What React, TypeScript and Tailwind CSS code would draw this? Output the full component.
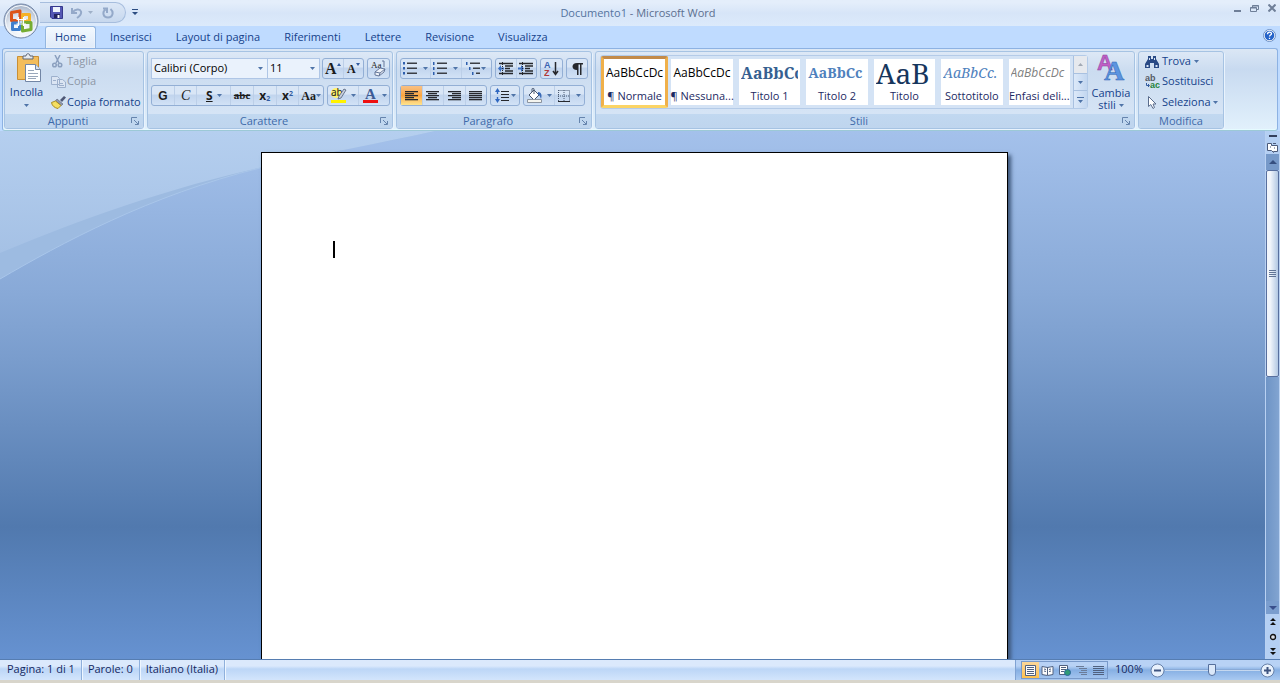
import React from "react";

const tabs = ["Inserisci", "Layout di pagina", "Riferimenti", "Lettere", "Revisione", "Visualizza"];

const styleCards = [
  { name: "¶ Normale", sample: "AaBbCcDc", look: "text-xs text-black", active: true },
  { name: "¶ Nessuna...", sample: "AaBbCcDc", look: "text-xs text-black" },
  { name: "Titolo 1", sample: "AaBbCc", look: "text-base font-bold text-[#365f91] font-['Noto_Serif','DejaVu_Serif',serif]" },
  { name: "Titolo 2", sample: "AaBbCc", look: "text-sm font-bold text-[#4f81bd] font-['Noto_Serif','DejaVu_Serif',serif]" },
  { name: "Titolo", sample: "AaB", look: "text-[28px] text-[#17365d] font-['Noto_Serif','DejaVu_Serif',serif]" },
  { name: "Sottotitolo", sample: "AaBbCc.", look: "text-sm italic text-[#4f81bd] font-['Noto_Serif','DejaVu_Serif',serif]" },
  { name: "Enfasi deli...", sample: "AaBbCcDc", look: "text-xs italic text-[#808080]" },
];

function Caret({ muted = false }: { muted?: boolean }) {
  return (
    <svg width="5" height="3" viewBox="0 0 5 3" className="shrink-0" aria-hidden="true">
      <path d="M0 0h5L2.500 3z" fill={muted ? "#9fb0c8" : "#4f74a8"} />
    </svg>
  );
}

interface GroupProps {
  label: string;
  launcher?: boolean;
  className?: string;
  children: React.ReactNode;
}

function Group({ label, launcher = true, className = "", children }: GroupProps) {
  return (
    <section
      aria-label={label}
      className={`flex flex-col overflow-hidden rounded-[3px] border border-[#a6c3e3] bg-linear-to-b from-[#dde8f6] from-0% via-[#cbdcf0] via-25% to-[#d9e7f7] shadow-[1px_1px_0_#e9f3fd] ${className}`}
    >
      <div className="flex min-h-0 flex-1">{children}</div>
      <div className="flex h-[14px] items-center bg-linear-to-b from-[#c1d8f0] to-[#bfd5ee] text-[#3e6aaa]">
        <span className="flex-1 text-center leading-[14px]">{label}</span>
        {launcher && (
          <button type="button" aria-label={`Opzioni ${label}`} className="mr-1">
            <svg width="8" height="8" viewBox="0 0 8 8" fill="none" stroke="#6684ad">
              <path d="M.5 6V.5H6M3 3l4 4M7.500 4v3.500H4" />
            </svg>
          </button>
        )}
      </div>
    </section>
  );
}

function Cluster({ className = "", children }: { className?: string; children: React.ReactNode }) {
  return (
    <div
      className={`flex h-[21px] divide-x divide-[#bccfe8] rounded-[3px] border border-[#93afd5] bg-linear-to-b from-[#d9e6f6] from-40% via-[#c2d5ee] via-50% to-[#d2e2f6] ${className}`}
    >
      {children}
    </div>
  );
}

interface ToolProps {
  label: string;
  className?: string;
  caret?: boolean;
  children: React.ReactNode;
}

function Tool({ label, className = "", caret, children }: ToolProps) {
  return (
    <button
      type="button"
      aria-label={label}
      className={`flex flex-1 items-center justify-center gap-1 text-[#1c1c1c] ${className}`}
    >
      {children}
      {caret && <Caret />}
    </button>
  );
}

function Combo({ label, value, className = "" }: { label: string; value: string; className?: string }) {
  return (
    <div className={`relative h-[21px] border border-[#afc6e6] bg-[#eaf2fc] ${className}`}>
      <select
        aria-label={label}
        defaultValue={value}
        className="h-full w-full appearance-none bg-transparent pl-[2px] text-[11px] text-black outline-none"
      >
        <option>{value}</option>
      </select>
      <span className="pointer-events-none absolute top-[8px] right-1">
        <Caret />
      </span>
    </div>
  );
}

/* Five text lines; each entry is [x, width] */
function Lines({ rows }: { rows: [number, number][] }) {
  return (
    <svg width="15" height="11" viewBox="0 0 15 11" fill="#26282d">
      {rows.map(([x, w], i) => (
        <rect key={i} x={x} y={i * 2 + 1} width={w} height="1.300" />
      ))}
    </svg>
  );
}

function OfficeLogo() {
  return (
    <svg width="36" height="36" viewBox="0 0 36 36">
      <defs>
        <radialGradient id="orb" cx="50%" cy="75%" r="70%">
          <stop offset="0" stopColor="#ffffff" />
          <stop offset=".55" stopColor="#e4eaf2" />
          <stop offset="1" stopColor="#a9b6ca" />
        </radialGradient>
      </defs>
      <circle cx="18" cy="18" r="17" fill="url(#orb)" stroke="#7387a8" />
      <circle cx="18" cy="18" r="15.500" fill="none" stroke="#f8fbff" />
      <g fill="none" strokeWidth="3" strokeLinejoin="round">
        <path d="M8.500 9.500l8.500-1.500v9.500H8.500z" stroke="#dd5418" />
        <path d="M19.500 11.500h7v6.500h-7z" stroke="#f5b126" />
        <path d="M9.500 20h7v6.500h-7z" stroke="#3f7fce" />
        <path d="M19.500 19.500H28v7l-8.500 1.500z" stroke="#76ad33" />
      </g>
      <path d="M15.500 14v9M20.500 14v9M13.500 16.500h9.500M13.500 21h9.500" fill="none" stroke="#ffffff" strokeWidth="1.200" />
      <path d="M16.500 17.500h3v2.500h-3z" fill="#c4d8ee" />
    </svg>
  );
}

function TitleBar() {
  return (
    <header className="flex h-[26px] items-start bg-linear-to-b from-[#e4eefb] from-10% via-[#d7e5f8] via-50% to-[#dceafb]">
      <div className="flex flex-1">
        <div className="mt-[2px] ml-10 flex h-[21px] w-[86px] items-center gap-[7px] rounded-r-full border border-l-0 border-[#a6bddd] bg-linear-to-b from-[#dce7f6] to-[#c7d8ee] pl-[10px]">
          <button type="button" aria-label="Salva">
            <svg width="13" height="13" viewBox="0 0 13 13">
              <path d="M.5.5h12v12H2L.5 11z" fill="#5457b4" stroke="#35388c" />
              <path d="M3 1h7v5H3z" fill="#eef3fc" />
              <path d="M4 8h6v4H4z" fill="#23245f" />
              <path d="M7.500 9h2v3h-2z" fill="#ffffff" />
            </svg>
          </button>
          <button type="button" aria-label="Annulla" className="flex items-center gap-[5px]">
            <svg width="13" height="12" viewBox="0 0 13 12" fill="none" stroke="#94a9c9" strokeWidth="2">
              <path d="M2 1v5h5M2.500 5.500C5 2 10 1.500 11 4.500c.7 2.500-1 4.500-4 6.500" />
            </svg>
            <Caret muted />
          </button>
          <button type="button" aria-label="Ripeti" className="pl-[2px]">
            <svg width="12" height="12" viewBox="0 0 12 12" fill="none" stroke="#94a9c9" strokeWidth="2">
              <path d="M8.500 2C12 5 11 10.500 6 10.500S0 5 3.500 2.500M1 1.500h4V6" />
            </svg>
          </button>
        </div>
        <button type="button" aria-label="Personalizza barra" className="ml-[6px]">
          <svg width="6" height="6" viewBox="0 0 6 6" fill="#2c4d82">
            <path d="M0 0h6v1H0zM0 3h6L3 6z" />
          </svg>
        </button>
      </div>
      <h1 className="text-[11px] leading-[26px] text-[#5c6f8f]">
        <span className="text-[#54749f]">Documento1</span> - Microsoft Word
      </h1>
      <div className="flex flex-1 items-center justify-end gap-[9px] pt-1 pr-1">
        <button type="button" aria-label="Riduci a icona" className="pt-[5px]">
          <svg width="7" height="2"><path d="M0 0h7v2H0z" fill="#6f7f98" /></svg>
        </button>
        <button type="button" aria-label="Ripristina">
          <svg width="9" height="7" viewBox="0 0 9 7" fill="none" stroke="#6f7f98">
            <path d="M2.500 2V.5h6v4H7M.5 2.500h6v4h-6zM.5 3h6M2.500 1h6" />
          </svg>
        </button>
        <button type="button" aria-label="Chiudi">
          <svg width="8" height="8" viewBox="0 0 8 8" stroke="#6f7f98" strokeWidth="2">
            <path d="M.5.5l7 7M7.500.5l-7 7" />
          </svg>
        </button>
      </div>
    </header>
  );
}

function TabRow() {
  return (
    <nav className="flex h-[22px] items-stretch bg-[#bfdbff] pl-[45px]">
      <button
        type="button"
        className="mr-[2px] w-[51px] rounded-t-[3px] border border-b-0 border-[#93b6e0] bg-linear-to-b from-[#f3f9ff] to-[#dfeaf8] pb-px text-[#15428b] shadow-[inset_0_0_2px_#ffffff]"
      >
        Home
      </button>
      {tabs.map((tab) => (
        <button key={tab} type="button" className="px-3 text-[#15428b]">
          {tab}
        </button>
      ))}
      <button type="button" aria-label="Guida" className="mr-1 ml-auto pb-1">
        <svg width="13" height="13" viewBox="0 0 13 13">
          <circle cx="6.500" cy="6.500" r="6" fill="#ffffff" stroke="#6c8fc4" />
          <circle cx="6.500" cy="6.500" r="4.800" fill="#2563c9" />
          <path d="M4.500 5.200c0-2.700 4-2.700 4-.4 0 1.200-2 1.400-2 2.700M6.500 8.700v1.300" fill="none" stroke="#fff" strokeWidth="1.300" />
        </svg>
      </button>
    </nav>
  );
}

function ClipboardGroup() {
  return (
    <Group label="Appunti" className="w-[140px]">
      <button type="button" className="flex w-[43px] flex-col items-center pt-px text-[#15428b]">
        <svg width="28" height="30" viewBox="0 0 28 30" className="ml-1">
          <path d="M2.500 3.500h21v23h-21z" fill="#f3bd5c" stroke="#c98f35" />
          <path d="M8 5V3h3c0-3 4-3 4 0h3v3H8z" fill="#e6e9ee" stroke="#5e6675" />
          <path d="M10.500 11.500h10l5 5v12h-15z" fill="#ffffff" stroke="#7286a5" />
          <path d="M20.500 11.500v5h5" fill="#d9e3f1" stroke="#7286a5" />
          <path d="M13 17.500h6M13 20.500h10M13 23.500h10M13 25.500h8" stroke="#9aa7ba" />
        </svg>
        <span className="pt-px leading-4">Incolla</span>
        <span className="mt-1">
          <Caret />
        </span>
      </button>
      <div className="flex flex-1 flex-col pl-[3px]">
        <button type="button" disabled className="flex h-[19px] items-center gap-[3px] text-[#8d97a6]">
          <svg width="13" height="13" viewBox="0 0 13 13" fill="none" stroke="#8ba0bf" strokeWidth="1.500">
            <path d="M4 0l4 8M9 0L5 8" />
            <circle cx="3.500" cy="10" r="1.800" />
            <circle cx="9" cy="10" r="1.800" />
          </svg>
          Taglia
        </button>
        <button type="button" disabled className="flex h-[21px] items-center gap-px text-[#8d97a6]">
          <svg width="15" height="12" viewBox="0 0 15 12" fill="#dbe5f3" stroke="#9db0cc">
            <path d="M.5.5h6l2 2v6h-8zM6.500 3.500h5l3 2.500v5.500h-8z" />
            <path d="M8 7.500h4M8 9.500h5M2 4.500h3" />
          </svg>
          Copia
        </button>
        <button type="button" className="flex h-[20px] items-center gap-px whitespace-nowrap text-[#15428b]">
          <svg width="15" height="13" viewBox="0 0 15 13">
            <path d="M9 4l4-4 2 1.500L11 6z" fill="#4e5876" />
            <path d="M6 3l6 5-1.500 1.500L4.500 5z" fill="#9198ae" stroke="#596176" strokeWidth=".6" />
            <path d="M4.500 5L10 9.500 7 12.500C4 12 1 10 .5 6.500z" fill="#f5df62" stroke="#a88c25" />
          </svg>
          Copia formato
        </button>
      </div>
    </Group>
  );
}

function FontGroup() {
  const serif = "font-['Liberation_Serif',serif] font-bold";
  return (
    <Group label="Carattere" className="w-[246px]">
      <div className="flex flex-1 flex-col gap-[6px] px-[3px] pt-[6px]">
        <div className="flex">
          <Combo label="Tipo di carattere" value="Calibri (Corpo)" className="w-[117px]" />
          <Combo label="Dimensione" value="11" className="-ml-px w-[53px]" />
          <Cluster className="ml-[2px] w-[42px]">
            <Tool label="Aumenta carattere">
              <span className={`${serif} text-base leading-4`}>A</span>
              <svg width="4" height="3" className="-ml-1 mb-2"><path d="M0 3h4L2 0z" fill="#315ba0" /></svg>
            </Tool>
            <Tool label="Riduci carattere">
              <span className={`${serif} text-xs leading-4`}>A</span>
              <svg width="4" height="3" className="-ml-1 mb-2"><path d="M0 0h4L2 3z" fill="#315ba0" /></svg>
            </Tool>
          </Cluster>
          <Cluster className="ml-[3px] w-[23px]">
            <Tool label="Cancella formattazione">
              <svg width="17" height="17" viewBox="0 0 17 17">
                <text x="1" y="8" fontSize="9" fontFamily="Liberation Serif" fill="#222">Aa</text>
                <path d="M5 12l5-4 5 1-1 3-5 4-4-1z" fill="#eef2f8" stroke="#65779a" />
                <path d="M5 12l5 1 5-4M10 13l-1 3M12 1h2v6" fill="none" stroke="#65779a" />
              </svg>
            </Tool>
          </Cluster>
        </div>
        <div className="flex gap-[3px]">
          <Cluster className="w-[173px]">
            <Tool label="Grassetto"><b className="font-['Liberation_Sans',sans-serif] text-xs font-black">G</b></Tool>
            <Tool label="Corsivo"><i className="font-['Liberation_Serif',serif] text-sm">C</i></Tool>
            <Tool label="Sottolineato" caret className="basis-3">
              <b className="text-xs leading-3 underline">S</b>
            </Tool>
            <Tool label="Barrato"><s className="font-['Liberation_Serif',serif] text-[11px] font-bold">abc</s></Tool>
            <Tool label="Pedice">
              <span className="text-xs font-bold">x<sub className="text-[7px] text-[#315ba0]">2</sub></span>
            </Tool>
            <Tool label="Apice">
              <span className="text-xs font-bold">x<sup className="text-[7px] text-[#315ba0]">2</sup></span>
            </Tool>
            <button type="button" aria-label="Maiuscole/minuscole" className="flex items-center px-[2px] text-[#1c1c1c]">
              <span className="font-['Liberation_Serif',serif] text-xs font-bold">Aa</span>
              <Caret />
            </button>
          </Cluster>
          <Cluster className="w-[63px]">
            <Tool label="Evidenziatore" caret>
              <svg width="17" height="17" viewBox="0 0 17 17">
                <circle cx="6" cy="6" r="5" fill="#fff36b" />
                <text x="1" y="9" fontSize="10" fontFamily="Noto Sans" fill="#222">ab</text>
                <path d="M14 2l2 1-5 8-3 1 1-3z" fill="#c7d0de" stroke="#4f5d76" strokeWidth=".8" />
                <path d="M1 13h15v3H1z" fill="#fff200" />
              </svg>
            </Tool>
            <Tool label="Colore carattere" caret>
              <svg width="16" height="17" viewBox="0 0 16 17">
                <text x="3" y="12" fontSize="15" fontWeight="bold" fontFamily="Liberation Serif" fill="#3d5c96">A</text>
                <path d="M1 13h15v3H1z" fill="#ee1010" />
              </svg>
            </Tool>
          </Cluster>
        </div>
      </div>
    </Group>
  );
}

function ListIcon({ x = [0, 0, 0], square = false }: { x?: number[]; square?: boolean }) {
  return (
    <svg width="14" height="13" viewBox="0 0 14 13">
      {x.map((dx, i) => (
        <g key={i}>
          <rect x={dx} y={i * 5} width={square ? 2 : 1.5} height={square ? 2.5 : 3} fill="#2f5fae" />
          <rect x={dx + 4} y={i * 5 + 0.5} width={10 - dx} height="1.500" fill="#3b3e45" />
        </g>
      ))}
    </svg>
  );
}

function IndentIcon({ flip = false }: { flip?: boolean }) {
  return (
    <svg width="16" height="13" viewBox="0 0 16 13">
      <path d="M1 1.500h14M7 4h8M7 6.500h5M7 9h8M1 11.500h14" stroke="#26282d" strokeWidth="1.400" />
      <path d={flip ? "M6 6.500L3 3v2.500H0v2h3V10z" : "M0 6.500L3 3v2.500h3v2H3V10z"} fill="#3d71c4" />
      <path d="M4.500 0v13" stroke="#26282d" strokeDasharray="1 1" />
    </svg>
  );
}

function ParagraphGroup() {
  return (
    <Group label="Paragrafo" className="w-[196px]">
      <div className="flex flex-1 flex-col gap-[6px] px-[3px] pt-[6px]">
        <div className="flex gap-[3px]">
          <Cluster className="w-[92px]">
            <Tool label="Elenco puntato" caret className="gap-[6px]"><ListIcon square /></Tool>
            <Tool label="Elenco numerato" caret className="gap-[6px]"><ListIcon /></Tool>
            <Tool label="Elenco a più livelli" caret className="gap-px"><ListIcon x={[0, 3, 6]} /></Tool>
          </Cluster>
          <Cluster className="w-[42px]">
            <Tool label="Riduci rientro"><IndentIcon /></Tool>
            <Tool label="Aumenta rientro"><IndentIcon flip /></Tool>
          </Cluster>
          <Cluster className="w-[23px]">
            <Tool label="Ordina">
              <svg width="15" height="17" viewBox="0 0 15 17">
                <text x="0" y="8" fontSize="9" fontWeight="bold" fontFamily="Liberation Sans" fill="#3a62b0">A</text>
                <text x="0" y="16" fontSize="9" fontWeight="bold" fontFamily="Liberation Sans" fill="#b03a3a">Z</text>
                <path d="M11.500 2v12M9 11l2.500 3.500L14 11" fill="none" stroke="#26282d" strokeWidth="1.500" />
              </svg>
            </Tool>
          </Cluster>
          <Cluster className="w-[22px]">
            <Tool label="Mostra tutto">
              <svg width="11" height="12" viewBox="0 0 11 12">
                <path d="M11 0v1.500H9.500V12H8V1.500H6.500V12H5V7C-1 7-1 0 5 0z" fill="#26282d" />
              </svg>
            </Tool>
          </Cluster>
        </div>
        <div className="flex gap-[3px]">
          <Cluster className="w-[87px]">
            <Tool label="Allinea a sinistra" className="bg-linear-to-b from-[#f8c083] via-[#fba63f] to-[#fde48f]">
              <Lines rows={[[1, 13], [1, 9], [1, 13], [1, 9], [1, 13]]} />
            </Tool>
            <Tool label="Centra"><Lines rows={[[1, 13], [3, 9], [1, 13], [3, 9], [1, 13]]} /></Tool>
            <Tool label="Allinea a destra"><Lines rows={[[1, 13], [5, 9], [1, 13], [5, 9], [1, 13]]} /></Tool>
            <Tool label="Giustifica"><Lines rows={[[1, 13], [1, 13], [1, 13], [1, 13], [1, 13]]} /></Tool>
          </Cluster>
          <Cluster className="w-[30px]">
            <Tool label="Interlinea" caret className="gap-px">
              <svg width="15" height="15" viewBox="0 0 15 15">
                <path d="M0 4l2.500-4L5 4H3.200v2H1.800V4zM0 11l2.500 4L5 11H3.200V9H1.800v2z" fill="#2f67c0" />
                <path d="M6 3.500h8M6 6.500h8M6 9.500h8M6 12.500h8" stroke="#26282d" />
              </svg>
            </Tool>
          </Cluster>
          <Cluster className="w-[62px]">
            <Tool label="Sfondo" caret>
              <svg width="17" height="15" viewBox="0 0 17 15">
                <path d="M3 7l5-5 5 5-5 5z" fill="#ffffff" stroke="#48566e" />
                <path d="M8 6V1c0-1-2-1-2 0v3" fill="none" stroke="#48566e" />
                <path d="M12 4c4 0 4 4 3 7-1-2-1-4-3-4z" fill="#3969b5" />
                <path d="M1.500 11.500h14v3h-14z" fill="#f4f4ee" stroke="#8c949f" />
              </svg>
            </Tool>
            <Tool label="Bordi" caret className="gap-[6px]">
              <svg width="12" height="12" viewBox="0 0 12 12" stroke="#4b5a72">
                <path d="M.5.5h11v11M.5 0v11M6 0v11M0 6h11" fill="none" strokeDasharray="1 1" />
                <path d="M0 11.500h12" stroke="#26282d" />
              </svg>
            </Tool>
          </Cluster>
        </div>
      </div>
    </Group>
  );
}

function StylesGroup() {
  return (
    <Group label="Stili" className="w-[540px]">
      <div className="mt-[3px] ml-1 flex h-[54px] flex-1 rounded-[3px] border border-[#b4cbe8] bg-[#d4e3f5]">
        <div className="grid flex-1 grid-cols-7">
          {styleCards.map((card) => (
            <button
              key={card.name}
              type="button"
              className={`flex min-w-0 flex-col items-center ${
                card.active
                  ? "rounded-[2px] border-[3px] border-[#f0b04a] border-t-[#c28a4a] border-b-[#fbd465] bg-white"
                  : "m-[3px] bg-white"
              }`}
            >
              <span className={`flex h-[28px] w-full items-center overflow-hidden px-[2px] whitespace-nowrap ${card.look}`}>
                <span className="w-full overflow-hidden text-left leading-[28px]">{card.sample}</span>
              </span>
              <span className="leading-[18px] whitespace-nowrap text-[#1c2a63]">{card.name}</span>
            </button>
          ))}
        </div>
        <div className="flex w-[14px] flex-col divide-y divide-[#a9c1e0] border-l border-[#a9c1e0] bg-linear-to-r from-[#dce9f9] to-[#c3d7f0]">
          <button type="button" aria-label="Riga precedente" className="flex flex-1 items-center justify-center bg-[#e6e9ee]">
            <svg width="5" height="3"><path d="M0 3h5L2.500 0z" fill="#a2a9b4" /></svg>
          </button>
          <button type="button" aria-label="Riga successiva" className="flex flex-1 items-center justify-center">
            <Caret />
          </button>
          <button type="button" aria-label="Altri stili" className="flex flex-1 items-center justify-center">
            <svg width="7" height="6" viewBox="0 0 7 6" fill="#4f74a8"><path d="M0 0h7v1H0zM1 3h5L3.500 6z" /></svg>
          </button>
        </div>
      </div>
      <button type="button" className="flex w-[46px] flex-col items-center pt-px text-[#15428b]">
        <svg width="30" height="29" viewBox="0 0 30 29">
          <text x="1" y="17" fontSize="22" fontWeight="bold" fontFamily="Liberation Sans" fill="#c05fc6" stroke="#8b3f9c" strokeWidth=".5">A</text>
          <text x="8" y="27" fontSize="28" fontWeight="bold" fontFamily="Liberation Serif" fill="#5b94e0" stroke="#3167b5" strokeWidth=".5">A</text>
        </svg>
        <span className="pt-[5px] leading-[12px]">Cambia</span>
        <span className="flex items-center gap-[3px] leading-[12px]">
          stili <Caret />
        </span>
      </button>
    </Group>
  );
}

function EditGroup() {
  return (
    <Group label="Modifica" launcher={false} className="w-[86px]">
      <div className="flex flex-1 flex-col pl-[6px] text-[#15428b]">
        <button type="button" className="flex h-[19px] items-center gap-[3px]">
          <svg width="14" height="12" viewBox="0 0 14 12" fill="#294a86">
            <path d="M3 0h3v3h2V0h3v3l3 5v4H9V7H5v5H0V8l3-5z" />
            <path d="M1.500 9h2v2h-2zM10.500 9h2v2h-2zM4 2h1v2H4zM9 2h1v2H9z" fill="#d6e4f7" />
          </svg>
          Trova <Caret />
        </button>
        <button type="button" className="flex h-[21px] items-center gap-[2px]">
          <svg width="15" height="15" viewBox="0 0 15 15" fontFamily="Liberation Sans" fontWeight="bold" fontSize="9">
            <text x="0" y="7" fill="#555b66">ab</text>
            <text x="5" y="14" fill="#24833a">ac</text>
            <path d="M1.500 9v2.500H4M3 10l1.500 1.500L3 13" fill="none" stroke="#315ba0" />
          </svg>
          Sostituisci
        </button>
        <button type="button" className="flex h-[20px] items-center gap-[2px]">
          <svg width="15" height="13" viewBox="0 0 15 13">
            <path d="M3.500.5v10l2.300-2L8 12.500l1.500-1L8 8h3z" fill="#fff" stroke="#5a6c8c" />
          </svg>
          Seleziona <Caret />
        </button>
      </div>
    </Group>
  );
}

function ScrollColumn() {
  return (
    <div className="flex w-[15px] flex-col items-stretch border-x border-[#b9d1f2] bg-[#b4cff3]">
      <button type="button" aria-label="Dividi" className="flex h-[9px] items-center justify-center">
        <svg width="8" height="2"><path d="M0 0h8v2H0z" fill="#343f5c" /></svg>
      </button>
      <button type="button" aria-label="Righello" className="flex h-[14px] items-center justify-center">
        <svg width="11" height="11" viewBox="0 0 11 11" fill="#ffffff" stroke="#4b5a7a">
          <path d="M.5 1.500h4v2h6v6h-4v1l-2-2h-4z" />
          <path d="M6 1.500h3M7 6h1M3 5h1" />
        </svg>
      </button>
      <button type="button" aria-label="Scorri su" className="flex h-[16px] items-center justify-center bg-[#7699c9]">
        <svg width="8" height="4"><path d="M0 4h8L4 0z" fill="#354f80" /></svg>
      </button>
      <div className="flex flex-[205] items-center justify-center rounded-[2px] border border-[#586f9e] bg-linear-to-r from-[#f1f5fb] from-30% to-[#b2c8e3]">
        <svg width="7" height="7" viewBox="0 0 7 7" stroke="#617596"><path d="M0 .5h7M0 2.500h7M0 4.500h7M0 6.500h7" /></svg>
      </div>
      <div className="flex-[225] bg-linear-to-r from-[#6e94c6] to-[#82a4d1]" />
      <button type="button" aria-label="Scorri giù" className="flex h-[13px] items-center justify-center bg-[#7a9dce]">
        <svg width="8" height="4"><path d="M0 0h8L4 4z" fill="#394f8c" /></svg>
      </button>
      <button type="button" aria-label="Pagina precedente" className="flex h-[15px] items-center justify-center">
        <svg width="6" height="7" fill="#111"><path d="M0 3h6L3 0zM0 7h6L3 4z" /></svg>
      </button>
      <button type="button" aria-label="Seleziona oggetto" className="flex h-[15px] items-center justify-center">
        <svg width="8" height="8"><circle cx="4" cy="4" r="2.500" fill="#d8dee8" stroke="#111" strokeWidth="1.300" /></svg>
      </button>
      <button type="button" aria-label="Pagina successiva" className="flex h-[15px] items-center justify-center">
        <svg width="6" height="7" fill="#111"><path d="M0 0h6L3 3zM0 4h6L3 7z" /></svg>
      </button>
    </div>
  );
}

function ViewIcon({ kind }: { kind: string }) {
  return (
    <svg width="13" height="11" viewBox="0 0 13 11" fill="none" stroke="#50617f">
      {kind === "print" && <path d="M1.500.5h10v10h-10zM3 2.500h7M3 4.500h7M3 6.500h7M3 8.500h7" fill="#fdfdfd" />}
      {kind === "read" && <path d="M1 1.500l5.500 1 5.500-1v8l-5.500 1-5.500-1zM6.500 2v8M3 4l2 .5M3 6l2 .5M8 4.500l2-.5M8 6.500l2-.5" fill="#fdfdfd" />}
      {kind === "web" && (
        <>
          <path d="M1.500.5h8v9h-8zM3 2.500h5M3 4.500h5M3 6.500h3" fill="#fdfdfd" />
          <circle cx="9.500" cy="7.500" r="3" fill="#2f9a75" stroke="#27649c" />
        </>
      )}
      {kind === "outline" && <path d="M1 1.500h8M4 3.500h8M6 5.500h6M4 7.500h8M6 9.500h6" stroke="#6b7c99" />}
      {kind === "draft" && <path d="M1 1.500h11M1 3.500h11M1 5.500h11M1 7.500h11M1 9.500h11" />}
    </svg>
  );
}

function StatusBar() {
  const views = [
    { kind: "print", label: "Layout di stampa" },
    { kind: "read", label: "Lettura" },
    { kind: "web", label: "Layout Web" },
    { kind: "outline", label: "Struttura" },
    { kind: "draft", label: "Bozza" },
  ];
  const cell = "border-r border-[#8fb0dc] px-[6px] whitespace-nowrap shadow-[1px_0_0_#eef6ff]";
  return (
    <footer className="border-b-[3px] border-[#d8d5cb]">
      <div className="flex h-[21px] items-stretch border-t border-[#567db1] bg-linear-to-b from-[#dbe9fc] from-30% via-[#bcd6f7] via-45% to-[#d3e5fc] pl-px leading-[18px] text-[#15285f]">
        <span className={cell}>Pagina: 1 di 1</span>
        <span className={cell}>Parole: 0</span>
        <span className={cell}>Italiano (Italia)</span>
        <div className="ml-auto flex items-center border-l border-[#7fa2d3] bg-linear-to-b from-[#b8d2f5] from-30% via-[#86afe3] via-50% to-[#a9c9f1] pl-[5px]">
          <div className="flex h-[18px] border border-[#7899c9]">
            {views.map((view) => (
              <button
                key={view.kind}
                type="button"
                aria-label={view.label}
                className={`flex w-[17px] items-center justify-center ${
                  view.kind === "print" ? "bg-linear-to-b from-[#fbd79a] to-[#fdc04c]" : ""
                }`}
              >
                <ViewIcon kind={view.kind} />
              </button>
            ))}
          </div>
          <button type="button" className="w-[42px] pb-[2px] text-center">100%</button>
          <button type="button" aria-label="Riduci zoom">
            <svg width="15" height="15" viewBox="0 0 15 15">
              <circle cx="7.500" cy="7.500" r="6.500" fill="#e8f1fc" stroke="#6680a8" />
              <path d="M4 7.500h7" stroke="#3e5480" strokeWidth="2" />
            </svg>
          </button>
          <input
            type="range"
            aria-label="Zoom"
            defaultValue={49}
            className="h-[14px] w-[95px] appearance-none bg-[linear-gradient(#6b93cb,#e2eefc)] bg-[length:100%_2px] bg-center bg-no-repeat [&::-webkit-slider-thumb]:h-[12px] [&::-webkit-slider-thumb]:w-[8px] [&::-webkit-slider-thumb]:appearance-none [&::-webkit-slider-thumb]:rounded-b-[4px] [&::-webkit-slider-thumb]:border [&::-webkit-slider-thumb]:border-[#556f9c] [&::-webkit-slider-thumb]:bg-[#dbe8f9]"
          />
          <button type="button" aria-label="Aumenta zoom" className="mr-[5px]">
            <svg width="15" height="15" viewBox="0 0 15 15">
              <circle cx="7.500" cy="7.500" r="6.500" fill="#e8f1fc" stroke="#6680a8" />
              <path d="M4 7.500h7M7.500 4v7" stroke="#3e5480" strokeWidth="2" />
            </svg>
          </button>
        </div>
      </div>
    </footer>
  );
}

export default function App() {
  return (
    <div className="relative flex h-screen flex-col overflow-hidden font-['Open_Sans','Noto_Sans',sans-serif] text-[11px]">
      <TitleBar />
      <TabRow />
      {/* Round menu button hangs over both top rows */}
      <button type="button" aria-label="Pulsante Office" className="absolute top-[3px] left-[3px]">
        <OfficeLogo />
      </button>

      <div className="bg-[#bfdbff] px-[2px]">
        <div className="flex h-[83px] gap-[3px] rounded-[3px] border border-[#8db2e3] border-b-[#9cc9d6] bg-linear-to-b from-[#dbe7f5] from-0% via-[#c8daf0] via-25% to-[#e2f1fc] px-px pt-[2px] pb-px shadow-[inset_0_-1px_0_#e5fbff]">
          <ClipboardGroup />
          <FontGroup />
          <ParagraphGroup />
          <StylesGroup />
          <EditGroup />
        </div>
      </div>

      <main className="relative flex min-h-0 flex-1 bg-[linear-gradient(#a4c1eb,#88a9d7_31%,#7a9dcd_43%,#5179ae_75%,#6692d1)]">
        <svg className="absolute top-0 left-0" width="440" height="150" viewBox="0 0 440 150">
          <defs>
            <linearGradient id="sky" x1="0" y1="0" x2="0" y2="1">
              <stop offset="0" stopColor="#b5cfef" />
              <stop offset="1" stopColor="#a5c1e5" />
            </linearGradient>
          </defs>
          <path d="M0 148C60 113 150 64 260 37C320 23 380 12 435 0H0z" fill="#9dbbe1" />
          <path d="M0 122C60 97 150 62 250 39C320 23 380 12 435 0H0z" fill="url(#sky)" />
          <path d="M0 148C60 113 150 64 260 37" fill="none" stroke="#a9c6ea" />
        </svg>
        <div className="relative flex flex-1 justify-center overflow-hidden pt-[21px] pl-1">
          <article
            aria-label="Documento1"
            className="w-[747px] border border-b-0 border-black bg-white px-[71px] pt-[88px] shadow-[3px_3px_4px_#3d5679]"
          >
            <span className="block h-[17px] w-[2px] bg-black" />
          </article>
        </div>
        <ScrollColumn />
      </main>

      <StatusBar />
    </div>
  );
}
